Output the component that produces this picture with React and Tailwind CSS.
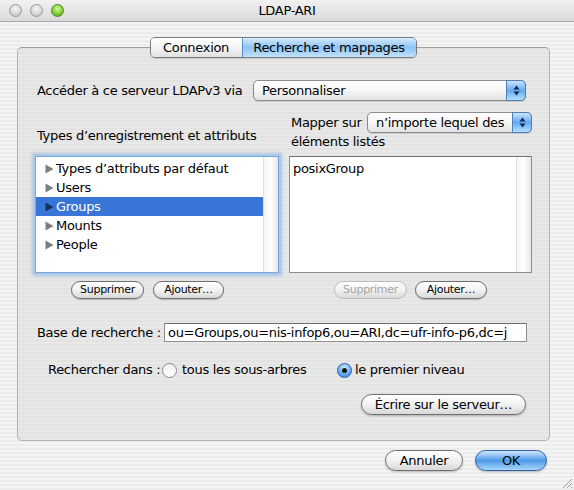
import React from "react";

const stripes =
  "bg-[repeating-linear-gradient(180deg,#ececec_0px,#ececec_2px,#f4f4f4_2px,#f4f4f4_4px)]";

const Light = ({ color }) => {
  const styles = {
    gray: "border-[#9a9a9a] bg-[radial-gradient(circle_at_50%_35%,#f6f6f6_0%,#d8d8d8_55%,#b4b4b4_100%)]",
    green: "border-[#4a8a1d] bg-[radial-gradient(circle_at_50%_35%,#d8fba0_0%,#87d23c_50%,#4d9a15_100%)]",
  };
  return <span className={`block h-[13px] w-[13px] rounded-full border ${styles[color]}`} />;
};

const Arrows = () => (
  <svg width="7" height="11" viewBox="0 0 7 11">
    <path d="M3.5 0.5 L6.5 4.5 L0.5 4.5 Z" fill="#10285a" />
    <path d="M3.5 10.5 L6.5 6.5 L0.5 6.5 Z" fill="#10285a" />
  </svg>
);

const Popup = ({ label, width }) => (
  <div
    className={`flex h-[21px] ${width} items-stretch rounded-[5px] border border-[#8c8c8c] bg-gradient-to-b from-white via-[#f6f6f6] to-[#e2e2e2] shadow-[0_1px_1px_rgba(0,0,0,0.12)]`}
  >
    <span className="flex-1 overflow-hidden whitespace-nowrap pl-[8px] leading-[19px]">{label}</span>
    <span className="-my-px -mr-px flex w-[20px] items-center justify-center rounded-r-[5px] border border-[#4f7fba] bg-gradient-to-b from-[#cbe6fd] via-[#63a9ee] to-[#b5defc]">
      <Arrows />
    </span>
  </div>
);

const SmallButton = ({ children, width, disabled }) => (
  <button
    className={`flex h-[18px] ${width} items-center justify-center rounded-full border bg-gradient-to-b from-white via-[#f2f2f2] to-[#d9d9d9] text-[11px] ${
      disabled ? "border-[#bdbdbd] text-[#a4a4a4]" : "border-[#6f6f6f] text-black shadow-[0_1px_1px_rgba(0,0,0,0.2)]"
    }`}
  >
    {children}
  </button>
);

const Button = ({ children, width, primary }) => (
  <button
    className={`flex h-[21px] ${width} items-center justify-center rounded-full border text-[13px] shadow-[0_1px_2px_rgba(0,0,0,0.25)] ${
      primary
        ? "border-[#2f5fa8] bg-gradient-to-b from-[#cfe6fc] via-[#4d9ae8] to-[#a7d6fc]"
        : "border-[#707070] bg-gradient-to-b from-white via-[#f2f2f2] to-[#d8d8d8]"
    }`}
  >
    {children}
  </button>
);

const Triangle = ({ dark }) => (
  <svg width="9" height="10" viewBox="0 0 9 10" className="mr-[2px] shrink-0">
    <path d="M0.5 0.5 L8.5 5 L0.5 9.5 Z" fill={dark ? "#16325f" : "#7c7c7c"} />
  </svg>
);

const Radio = ({ checked }) => (
  <span
    className={`flex h-[15px] w-[15px] shrink-0 items-center justify-center rounded-full border ${
      checked
        ? "border-[#2f5fa8] bg-[radial-gradient(circle_at_50%_30%,#d5ebfd_0%,#5fa6ee_60%,#3a83d8_100%)]"
        : "border-[#8a8a8a] bg-gradient-to-b from-[#f0f0f0] to-white"
    }`}
  >
    {checked && <span className="h-[5px] w-[5px] rounded-full bg-[#111]" />}
  </span>
);

const recordTypes = ["Types d’attributs par défaut", "Users", "Groups", "Mounts", "People"];

export default function App() {
  return (
    <div
      className={`relative h-[490px] w-[574px] overflow-hidden whitespace-nowrap text-[13px] tracking-[-0.3px] text-black ${stripes} font-['Lucida_Grande','DejaVu_Sans',sans-serif]`}
    >
      {/* title bar */}
      <div className="relative flex h-[22px] items-center border-b border-[#a9a9a9] bg-gradient-to-b from-[#f1f1f1] to-[#dadada]">
        <div className="flex gap-[8px] pl-[9px]">
          <Light color="gray" />
          <Light color="gray" />
          <Light color="green" />
        </div>
        <span className="absolute left-0 right-0 text-center leading-[22px]">LDAP-ARI</span>
      </div>

      {/* tab view */}
      <div className="ml-[17px] mt-[25px] h-[394px] w-[533px] rounded-[5px] border border-[#b2b2b2] border-t-[#9c9c9c] bg-[repeating-linear-gradient(180deg,#e3e3e3_0px,#e3e3e3_2px,#e8e8e8_2px,#e8e8e8_4px)]">
        <div className="-mt-[11px] flex justify-center pr-[1px]">
          <div className="flex h-[21px] overflow-hidden rounded-[5px] border border-[#7d7d7d] shadow-[0_1px_1px_rgba(0,0,0,0.15)]">
            <span className="flex w-[91px] items-center justify-center bg-gradient-to-b from-white via-[#f5f5f5] to-[#e0e0e0]">
              Connexion
            </span>
            <span className="flex w-[174px] items-center justify-center border-l border-[#5d8cc4] bg-gradient-to-b from-[#d4eafd] via-[#8cc3f5] to-[#c2e3fd]">
              Recherche et mappages
            </span>
          </div>
        </div>

        <div className="mt-[22px] flex h-[21px] items-center pl-[19px]">
          <span className="w-[216px]">Accéder à ce serveur LDAPv3 via</span>
          <Popup label="Personnaliser" width="w-[273px]" />
        </div>

        <div className="mt-[11px] flex gap-[10px] pl-[17px]">
          {/* record types */}
          <div className="w-[244px]">
            <div className="mt-[16px] h-[16px] pl-[2px] leading-[16px]">Types d’enregistrement et attributs</div>
            <div className="mt-[12px] flex h-[117px] border border-[#7ea6d6] shadow-[0_0_0_2px_#a8c8ec,0_0_3px_3px_rgba(110,160,220,0.45)]">
              <div className="flex-1 bg-white pt-[2px]">
                {recordTypes.map((t) => {
                  const sel = t === "Groups";
                  return (
                    <div
                      key={t}
                      className={`flex h-[19px] items-center pl-[9px] ${sel ? "bg-[#3875d7] text-white" : ""}`}
                    >
                      <Triangle dark={sel} />
                      {t}
                    </div>
                  );
                })}
              </div>
              <div className="w-[15px] border-l border-[#e0e0e0] bg-gradient-to-r from-[#f4f4f4] via-white to-[#e6e6e6]" />
            </div>
            <div className="mt-[8px] flex gap-[9px] pl-[36px]">
              <SmallButton width="w-[73px]">Supprimer</SmallButton>
              <SmallButton width="w-[71px]">Ajouter…</SmallButton>
            </div>
          </div>

          {/* mapping */}
          <div className="w-[243px]">
            <div className="flex h-[21px] items-center pl-[2px]">
              <span className="w-[76px]">Mapper sur</span>
              <Popup label="n’importe lequel des" width="w-[165px]" />
            </div>
            <div className="mt-[1px] h-[16px] pl-[2px] leading-[16px]">éléments listés</div>
            <div className="mt-[6px] flex h-[117px] border border-[#8e8e8e] border-t-[#6f6f6f]">
              <div className="flex-1 bg-white pl-[3px] pt-[2px]">
                <div className="h-[19px] leading-[19px]">posixGroup</div>
              </div>
              <div className="w-[15px] border-l border-[#e0e0e0] bg-gradient-to-r from-[#f4f4f4] via-white to-[#e6e6e6]" />
            </div>
            <div className="mt-[8px] flex justify-center gap-[8px]">
              <SmallButton width="w-[73px]" disabled>
                Supprimer
              </SmallButton>
              <SmallButton width="w-[72px]">Ajouter…</SmallButton>
            </div>
          </div>
        </div>

        <div className="mt-[24px] flex h-[19px] items-center pl-[19px]">
          <span className="w-[127px]">Base de recherche :</span>
          <div className="h-[19px] w-[363px] overflow-hidden border border-[#8f8f8f] border-t-[#6c6c6c] bg-white pl-[3px] leading-[17px]">
            ou=Groups,ou=nis-infop6,ou=ARI,dc=ufr-info-p6,dc=j
          </div>
        </div>

        <div className="mt-[20px] flex h-[16px] items-center pl-[30px]">
          <span className="w-[114px]">Rechercher dans :</span>
          <Radio />
          <span className="ml-[5px] w-[155px]">tous les sous-arbres</span>
          <Radio checked />
          <span className="ml-[3px]">le premier niveau</span>
        </div>

        <div className="mt-[16px] pl-[343px]">
          <Button width="w-[165px]">Écrire sur le serveur…</Button>
        </div>
      </div>

      {/* dialog buttons */}
      <div className="mt-[9px] flex gap-[12px] pl-[385px]">
        <Button width="w-[78px]">Annuler</Button>
        <Button width="w-[72px]" primary>
          OK
        </Button>
      </div>

      {/* resize grip */}
      <svg width="12" height="12" viewBox="0 0 12 12" className="absolute bottom-[1px] right-[1px]">
        <path d="M11 2 L2 11 M11 6 L6 11 M11 10 L10 11" stroke="#9a9a9a" strokeWidth="1" />
      </svg>
    </div>
  );
}
